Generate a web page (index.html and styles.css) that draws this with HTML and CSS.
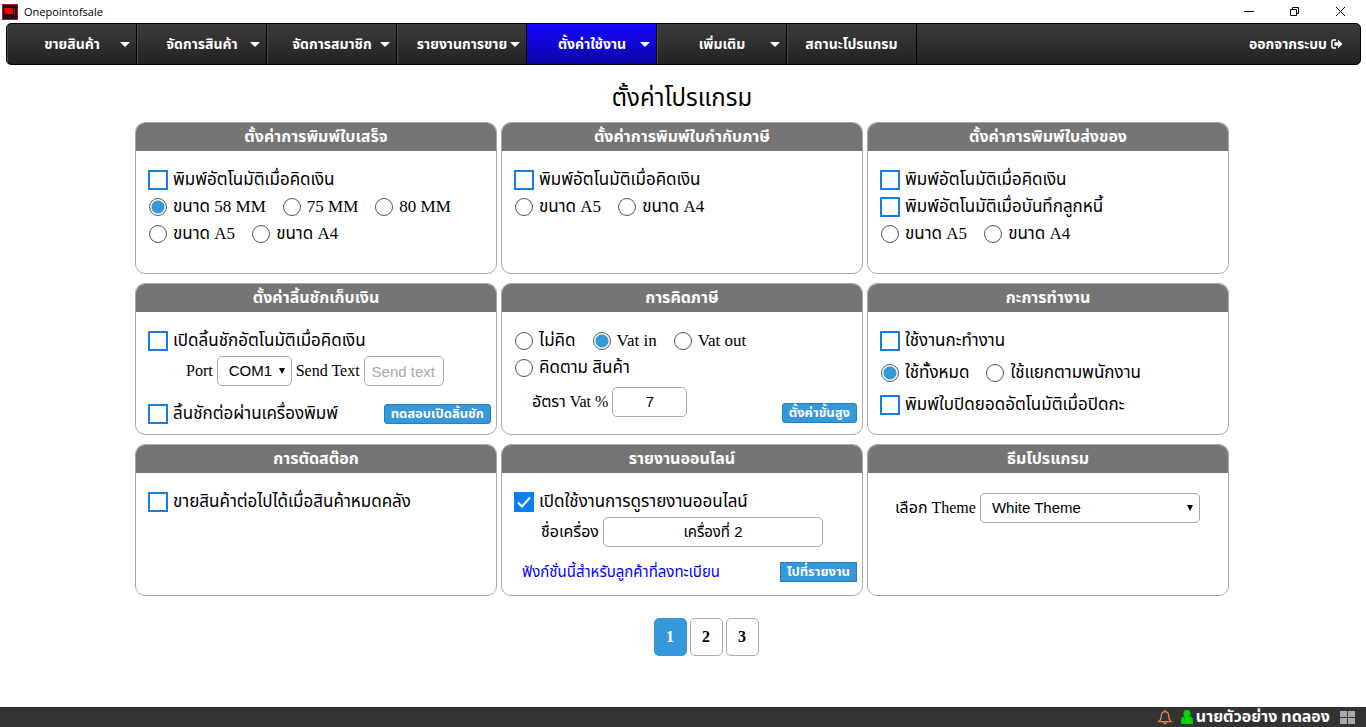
FILE: index.html
```html
<!DOCTYPE html>
<html lang="th">
<head>
<meta charset="utf-8">
<title>Onepointofsale</title>
<meta name="viewport" content="width=device-width, initial-scale=1">
<link rel="stylesheet" href="styles.css">
</head>
<body>
<header class="titlebar">
  <svg class="app-icon" width="16" height="16" viewBox="0 0 16 16" aria-hidden="true"><rect width="16" height="16" fill="#c41212"/><rect x="1" y="1" width="14" height="14" fill="#191020"/><path d="M2 4h9v6H3z" fill="#f00000"/><path d="M12 4h1v6h-1z" fill="#a01018"/></svg>
  <span class="app-name">Onepointofsale</span>
  <div class="window-buttons">
    <button type="button" aria-label="Minimize"><svg width="11" height="11" viewBox="0 0 11 11"><path d="M1 5.500h10" stroke="#000" fill="none"/></svg></button>
    <button type="button" aria-label="Restore"><svg width="11" height="11" viewBox="0 0 11 11"><path d="M1.500 3.500h6v6h-6zM3.500 3.500v-2h6v6h-2" stroke="#000" fill="none"/></svg></button>
    <button type="button" aria-label="Close"><svg width="11" height="11" viewBox="0 0 11 11"><path d="M1 1l9 9M10 1l-9 9" stroke="#000" fill="none"/></svg></button>
  </div>
</header>

<nav class="menu">
  <a class="menu-item" href="#"><span class="menu-label">ขายสินค้า</span><span class="caret"></span></a>
  <a class="menu-item" href="#"><span class="menu-label">จัดการสินค้า</span><span class="caret"></span></a>
  <a class="menu-item" href="#"><span class="menu-label">จัดการสมาชิก</span><span class="caret"></span></a>
  <a class="menu-item" href="#"><span class="menu-label">รายงานการขาย</span><span class="caret"></span></a>
  <a class="menu-item active" href="#"><span class="menu-label">ตั้งค่าใช้งาน</span><span class="caret"></span></a>
  <a class="menu-item" href="#"><span class="menu-label">เพิ่มเติม</span><span class="caret"></span></a>
  <a class="menu-item plain" href="#"><span class="menu-label">สถานะโปรแกรม</span></a>
  <a class="logout" href="#">ออกจากระบบ
    <svg width="12" height="10" viewBox="0 0 12 10" aria-hidden="true"><path d="M5 .9H2.500Q.9.900.9 2.500v5Q.9 9.100 2.500 9.100H5" fill="none" stroke="#fff" stroke-width="1.500"/><path d="M3.500 3.300H7V.8L11.600 5 7 9.200V6.700H3.500z" fill="#fff"/></svg>
  </a>
</nav>

<main class="content">
  <h1 class="page-title">ตั้งค่าโปรแกรม</h1>
  <div class="cards">
    <section class="card">
      <h2 class="card-title">ตั้งค่าการพิมพ์ใบเสร็จ</h2>
      <div class="card-body">
        <div class="row"><label class="option"><input class="check" type="checkbox">พิมพ์อัตโนมัติเมื่อคิดเงิน</label></div>
        <div class="row">
          <label class="option"><input class="radio" type="radio" name="receipt" checked>ขนาด 58 MM</label>
          <label class="option"><input class="radio" type="radio" name="receipt">75 MM</label>
          <label class="option"><input class="radio" type="radio" name="receipt">80 MM</label>
        </div>
        <div class="row">
          <label class="option"><input class="radio" type="radio" name="receipt">ขนาด A5</label>
          <label class="option"><input class="radio" type="radio" name="receipt">ขนาด A4</label>
        </div>
      </div>
    </section>

    <section class="card">
      <h2 class="card-title">ตั้งค่าการพิมพ์ใบกำกับภาษี</h2>
      <div class="card-body">
        <div class="row"><label class="option"><input class="check" type="checkbox">พิมพ์อัตโนมัติเมื่อคิดเงิน</label></div>
        <div class="row">
          <label class="option"><input class="radio" type="radio" name="invoice">ขนาด A5</label>
          <label class="option"><input class="radio" type="radio" name="invoice">ขนาด A4</label>
        </div>
      </div>
    </section>

    <section class="card">
      <h2 class="card-title">ตั้งค่าการพิมพ์ใบส่งของ</h2>
      <div class="card-body">
        <div class="row"><label class="option"><input class="check" type="checkbox">พิมพ์อัตโนมัติเมื่อคิดเงิน</label></div>
        <div class="row"><label class="option"><input class="check" type="checkbox">พิมพ์อัตโนมัติเมื่อบันทึกลูกหนี้</label></div>
        <div class="row">
          <label class="option"><input class="radio" type="radio" name="delivery">ขนาด A5</label>
          <label class="option"><input class="radio" type="radio" name="delivery">ขนาด A4</label>
        </div>
      </div>
    </section>

    <section class="card">
      <h2 class="card-title">ตั้งค่าลิ้นชักเก็บเงิน</h2>
      <div class="card-body">
        <div class="row"><label class="option"><input class="check" type="checkbox">เปิดลิ้นชักอัตโนมัติเมื่อคิดเงิน</label></div>
        <div class="row fields fields-port">
          <label for="port">Port</label>
          <select class="field field-small" id="port"><option>COM1</option><option>COM2</option></select>
          <label for="sendtext">Send Text</label>
          <input class="field field-text" id="sendtext" type="text" placeholder="Send text">
        </div>
        <div class="row card-foot">
          <label class="option"><input class="check" type="checkbox">ลิ้นชักต่อผ่านเครื่องพิมพ์</label>
          <button class="action" type="button">ทดสอบเปิดลิ้นชัก</button>
        </div>
      </div>
    </section>

    <section class="card">
      <h2 class="card-title">การคิดภาษี</h2>
      <div class="card-body">
        <div class="row">
          <label class="option"><input class="radio" type="radio" name="vat">ไม่คิด</label>
          <label class="option"><input class="radio" type="radio" name="vat" checked>Vat in</label>
          <label class="option"><input class="radio" type="radio" name="vat">Vat out</label>
        </div>
        <div class="row"><label class="option"><input class="radio" type="radio" name="vat">คิดตาม สินค้า</label></div>
        <div class="row fields fields-vat">
          <label for="rate">อัตรา Vat %</label>
          <input class="field field-small centered" id="rate" type="text" value="7">
          <button class="action" type="button">ตั้งค่าขั้นสูง</button>
        </div>
      </div>
    </section>

    <section class="card">
      <h2 class="card-title">กะการทำงาน</h2>
      <div class="card-body roomy">
        <div class="row"><label class="option"><input class="check" type="checkbox">ใช้งานกะทำงาน</label></div>
        <div class="row">
          <label class="option"><input class="radio" type="radio" name="shift" checked>ใช้ทั้งหมด</label>
          <label class="option"><input class="radio" type="radio" name="shift">ใช้แยกตามพนักงาน</label>
        </div>
        <div class="row"><label class="option"><input class="check" type="checkbox">พิมพ์ใบปิดยอดอัตโนมัติเมื่อปิดกะ</label></div>
      </div>
    </section>

    <section class="card">
      <h2 class="card-title">การตัดสต๊อก</h2>
      <div class="card-body">
        <div class="row"><label class="option"><input class="check" type="checkbox">ขายสินค้าต่อไปได้เมื่อสินค้าหมดคลัง</label></div>
      </div>
    </section>

    <section class="card">
      <h2 class="card-title">รายงานออนไลน์</h2>
      <div class="card-body">
        <div class="row"><label class="option"><input class="check" type="checkbox" checked>เปิดใช้งานการดูรายงานออนไลน์</label></div>
        <div class="row fields fields-machine">
          <label for="machine">ชื่อเครื่อง</label>
          <input class="field field-wide centered" id="machine" type="text" value="เครื่องที่ 2">
        </div>
        <div class="row card-foot">
          <a class="note" href="#">ฟังก์ชั่นนี้สำหรับลูกค้าที่ลงทะเบียน</a>
          <button class="action square" type="button">ไปที่รายงาน</button>
        </div>
      </div>
    </section>

    <section class="card">
      <h2 class="card-title">ธีมโปรแกรม</h2>
      <div class="card-body">
        <div class="row fields fields-theme">
          <label for="theme">เลือก Theme</label>
          <select class="field field-wide" id="theme"><option>White Theme</option><option>Black Theme</option></select>
        </div>
      </div>
    </section>
  </div>

  <div class="pager">
    <button class="page current" type="button" aria-current="page">1</button>
    <button class="page" type="button">2</button>
    <button class="page" type="button">3</button>
  </div>
</main>

<footer class="statusbar">
  <svg width="16" height="16" viewBox="0 0 16 16" aria-hidden="true"><path d="M8 1v1.700M8 2.700C5.300 2.700 4.300 4.800 4.300 7c0 2.800-.8 4.400-2.600 5.700h12.600c-1.800-1.300-2.600-2.900-2.600-5.700 0-2.200-1-4.300-3.700-4.300zM6.500 13q.2 1.700 1.500 1.700T9.500 13" fill="none" stroke="#d98550" stroke-width="1.300"/></svg>
  <svg class="user-icon" width="12" height="14" viewBox="0 0 12 14" aria-hidden="true"><circle cx="6" cy="3.600" r="3.600" fill="#00d400"/><path d="M0 14v-3.500C0 8 1.500 6.500 3 6.500h6c1.500 0 3 1.500 3 4V14z" fill="#00d400"/></svg>
  <span class="user-name">นายตัวอย่าง ทดลอง</span>
  <svg class="grid-icon" width="15" height="13" viewBox="0 0 15 13" aria-hidden="true"><path d="M0 0h7v6H0zM8 0h7v6H8zM0 7h7v6H0zM8 7h7v6H8z" fill="#a9a9a9"/></svg>
</footer>
</body>
</html>
```
FILE: styles.css
```css
* {
  box-sizing: border-box;
}

body {
  display: flex;
  flex-direction: column;
  min-height: 100vh;
  margin: 0;
  background: #fff;
  color: #000;
  font-family: "Liberation Serif", "Noto Sans Thai", "Noto Sans", serif;
  font-size: 16px;
}

button,
input,
select {
  margin: 0;
  font: inherit;
}

a {
  text-decoration: none;
}

/* Window title bar */
.titlebar {
  display: flex;
  align-items: center;
  gap: 6px;
  height: 23px;
  padding: 0 3px 0 2px;
  font-family: "Open Sans", "Noto Sans", sans-serif;
  font-size: 11px;
}

.window-buttons {
  display: flex;
  margin-left: auto;
}

.window-buttons button {
  display: grid;
  place-items: center;
  width: 46px;
  height: 22px;
  padding: 0;
  border: 0;
  background: none;
}

/* Main menu */
.menu {
  display: flex;
  height: 42px;
  margin: 0 5px 0 6px;
  overflow: hidden;
  border: 1px solid #000;
  border-radius: 5px;
  background: linear-gradient(#3c3c3c, #222);
  font-family: "Liberation Sans", "Noto Sans Thai", "Noto Sans", sans-serif;
  font-size: 14px;
  font-weight: bold;
  white-space: nowrap;
}

.menu-item {
  display: flex;
  align-items: center;
  width: 130px;
  padding: 0 6px 0 17px;
  border-right: 1px solid #000;
  box-shadow: inset 1px 0 #4a4a4a;
  color: #fff;
}

.menu-item.active {
  background: linear-gradient(#1407ff, #0c04a4);
  box-shadow: none;
}

.menu-item.plain {
  padding: 0 16px;
}

.menu-label {
  flex: 1;
  text-align: center;
}

.caret {
  border: 5px solid transparent;
  border-top-color: #fff;
  border-bottom: 0;
}

.logout {
  display: flex;
  align-items: center;
  gap: 4px;
  margin-left: auto;
  padding-right: 17px;
  color: #fff;
}

/* Settings cards */
.content {
  padding: 17px 7px 16px 5px;
}

.page-title {
  margin: 0 0 8px;
  font-size: 24px;
  font-weight: normal;
  line-height: 32px;
  text-align: center;
}

.cards {
  display: grid;
  grid-template-columns: repeat(3, 1fr);
  gap: 9px 4px;
  max-width: 1094px;
  margin: 0 auto;
}

.card {
  min-height: 152px;
  overflow: hidden;
  border: 1px solid #a9a9a9;
  border-radius: 10px;
}

.card-title {
  margin: 0;
  background: #757575;
  color: #fff;
  font-size: 16px;
  font-weight: bold;
  line-height: 28px;
  text-align: center;
}

.card-body {
  padding: 15px 5px 7px 12px;
}

.row {
  display: flex;
  align-items: center;
  gap: 16px;
  min-height: 27px;
  line-height: 26px;
  white-space: nowrap;
}

.roomy {
  display: grid;
  gap: 5px;
}

.fields {
  gap: 4px;
  min-height: 30px;
}

.fields-port {
  margin: 2px 0 14px;
  padding-left: 38px;
}

.fields-vat {
  align-items: flex-start;
  min-height: 36px;
  margin-top: 6px;
  padding-left: 18px;
  line-height: 30px;
}

.fields-machine {
  margin: 2px 0 11px;
  padding-left: 27px;
}

.fields-theme {
  margin-top: 5px;
  padding-left: 15px;
}

.card-foot {
  justify-content: space-between;
}

.option {
  display: flex;
  align-items: center;
  gap: 5px;
  font-size: 17px;
}

.check {
  width: 20px;
  height: 20px;
  border: 2px solid #1a7ee0;
  background: #fff;
  appearance: none;
}

.check:checked {
  background: #0a80f5 url("data:image/svg+xml,%3Csvg xmlns='http://www.w3.org/2000/svg' viewBox='0 0 16 16'%3E%3Cpath d='M2 8.500l4 4 8-9' fill='none' stroke='%23fff' stroke-width='2'/%3E%3C/svg%3E") center / 16px;
  border-color: #0a80f5;
}

.radio {
  width: 18px;
  height: 18px;
  margin: 0 1px;
  border: 1px solid #555;
  border-radius: 50%;
  background: #fff;
  appearance: none;
}

.radio:checked {
  background: radial-gradient(circle, #3498db 6px, #fff 7px);
}

.field {
  height: 30px;
  padding: 0 7px;
  border: 1px solid #a9a9a9;
  border-radius: 5px;
  background: #fff;
  color: #000;
  font-family: "Liberation Sans", "Noto Sans Thai", "Noto Sans", sans-serif;
  font-size: 15px;
}

.field::placeholder {
  color: #a9a9a9;
}

select.field {
  padding: 0 11px;
  background: #fff url("data:image/svg+xml,%3Csvg xmlns='http://www.w3.org/2000/svg' viewBox='0 0 6 6'%3E%3Cpath d='M0 0h6L3 6z'/%3E%3C/svg%3E") right 6px center / 6px 6px no-repeat;
  appearance: none;
}

.field-small {
  width: 75px;
}

.field-text {
  width: 80px;
}

.field-wide {
  width: 220px;
}

.centered {
  text-align: center;
}

.action {
  height: 20px;
  margin-left: auto;
  padding: 0 6px;
  border: 1px solid #2980b9;
  border-radius: 3px;
  background: #3498db;
  color: #fff;
  font-family: "Liberation Sans", "Noto Sans Thai", "Noto Sans", sans-serif;
  font-size: 13px;
  font-weight: bold;
  line-height: 18px;
}

.fields .action {
  align-self: flex-end;
}

.square {
  border-radius: 0;
}

.note {
  padding-left: 8px;
  color: #00f;
  font-size: 15px;
}

/* Pagination */
.pager {
  display: flex;
  justify-content: center;
  gap: 3px;
  margin-top: 22px;
  padding-left: 48px;
}

.page {
  width: 33px;
  height: 38px;
  padding: 0;
  border: 1px solid #a9a9a9;
  border-radius: 5px;
  background: #fff;
  color: #000;
  font-weight: bold;
}

.page.current {
  border-color: #3498db;
  background: #3498db;
  color: #fff;
}

/* Bottom status bar */
.statusbar {
  display: flex;
  align-items: center;
  justify-content: flex-end;
  height: 20px;
  margin-top: auto;
  padding-right: 11px;
  background: #333;
  color: #fff;
  font-size: 16px;
  font-weight: bold;
  line-height: 20px;
}

.user-icon {
  margin: 0 3px 0 8px;
}

.grid-icon {
  margin-left: 10px;
}
```
